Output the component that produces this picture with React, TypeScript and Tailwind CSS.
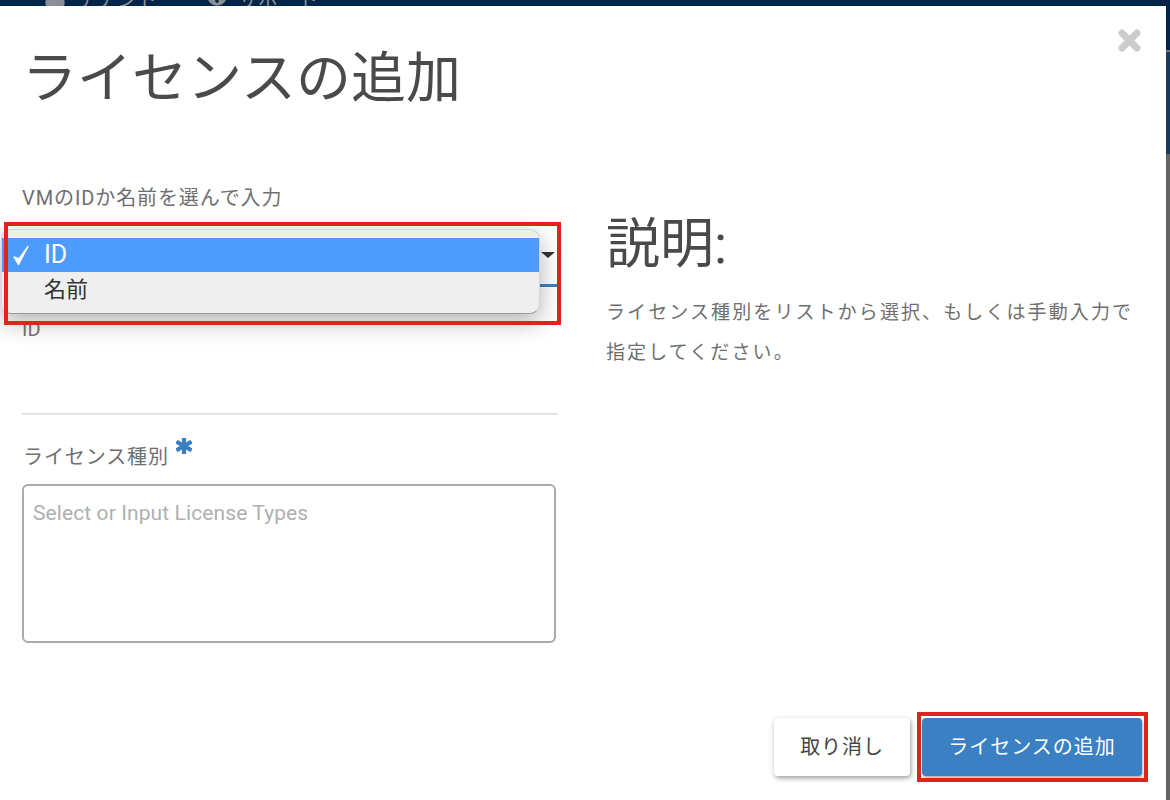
import React from "react";
import { FaAsterisk, FaUser, FaQuestionCircle } from "react-icons/fa";

const font = { fontFamily: '"Roboto","Noto Sans CJK JP",sans-serif' };

export default function App() {
  return (
    <div style={font} className="w-[1170px] h-[800px] overflow-hidden bg-[#fefefe] flex flex-col">
      {/* page behind the dialog */}
      <div className="h-[6px] shrink-0 bg-[#022448] overflow-hidden flex items-end text-[#8a8f96] text-[20px] leading-[20px] pl-[44px]">
        <FaUser className="w-[22px] h-[22px] shrink-0" />
        <span className="ml-[11px] -mb-[4px]">テナント</span>
        <FaQuestionCircle className="w-[20px] h-[20px] shrink-0 ml-[50px]" />
        <span className="ml-[11px] -mb-[4px]">サポート</span>
      </div>
      <div className="flex flex-1 min-h-0">
        <div className="w-[1166px] bg-white rounded-tr-[3px] flex flex-col relative">
          <button className="absolute top-[23px] right-[25px] text-[#cccccc]">
            <svg width="23" height="23" viewBox="0 0 23 23" fill="none" stroke="currentColor" strokeWidth="7" strokeLinecap="round">
              <path d="M4 4 L19 19 M19 4 L4 19" />
            </svg>
          </button>
          <h1 className="pl-[22px] pt-[38px] text-[55px] leading-[68px] font-normal text-[#4a4a4a] h-[172px] shrink-0">
            ライセンスの追加
          </h1>
          <div className="flex flex-1 min-h-0">
            <div className="w-[536px] ml-[22px] shrink-0 relative">
              <label className="block text-[20px] leading-[26px] text-[#6f6f6f] tracking-[0.9px] mt-[7px]">
                VMのIDか名前を選んで入力
              </label>
              <div className="h-[96px] border-b-[3px] border-[#3b80c3] -mt-[20px] relative">
                <div className="absolute right-[3px] top-[61px] w-0 h-0 border-l-[7px] border-r-[7px] border-t-[6px] border-l-transparent border-r-transparent border-t-[#333333]" />
              </div>
              <div className="h-[128px] border-b-2 border-[#e3e3e3] pt-[30px] text-[20px] leading-[24px] text-[#777777]">
                ID
              </div>
              <div className="flex items-start mt-[27px] ml-0 h-[34px]">
                <span className="text-[20px] leading-[30px] text-[#6f6f6f] tracking-[0.9px] ml-[1px]">ライセンス種別</span>
                <FaAsterisk stroke="currentColor" strokeWidth={50} className="w-[16px] h-[16px] text-[#3b80c3] ml-[7px] mt-[-4px]" />
              </div>
              <textarea
                readOnly
                placeholder="Select or Input License Types"
                className="block w-[534px] h-[159px] mt-[8px] border-2 border-[#aaaaaa] rounded-[6px] px-[9px] pt-[13px] pb-[12px] text-[21px] leading-[28px] tracking-[0.1px] outline-none resize-none placeholder:text-[#b0b0b0]"
              />

              {/* open native select menu */}
              <div className="absolute left-[-21px] top-[51px] w-[539px] h-[85px] rounded-[10px] bg-[#efefef] border border-[#d4d4d4] border-b-[#999999] pt-[8px] shadow-[0_8px_24px_rgba(0,0,0,0.3)]">
                <div className="h-[34px] bg-[#4c9bfd] text-white flex items-center relative pl-[42px] text-[25px]">
                  <svg className="absolute left-[10px] top-[7px]" width="18" height="21" viewBox="0 0 18 21" fill="none">
                    <path d="M2 12 L6.5 19.5 L16 1.5 L7 14 Z" fill="#fff" stroke="#fff" strokeWidth="1.4" strokeLinejoin="round" />
                  </svg>
                  ID
                </div>
                <div className="h-[34px] text-[#333333] flex items-center pl-[42px] text-[22px] pt-[1px]">名前</div>
              </div>
              {/* annotation frame */}
              <div className="absolute left-[-18px] top-[44px] w-[557px] h-[103px] border-[4px] border-[#e2231a]" />
            </div>
            <div className="ml-[48px] flex-1 pr-[28px]">
              <h2 className="text-[54px] leading-[60px] font-normal text-[#4a4a4a] mt-[37px]">説明:</h2>
              <p className="mt-[18px] text-[19px] leading-[40px] tracking-[2.1px] text-[#6f6f6f]">
                ライセンス種別をリストから選択、もしくは手動入力で指定してください。
              </p>
            </div>
          </div>
          <div className="flex justify-end items-center h-[70px] mb-[18px] pr-[24px] gap-[12px] relative">
            <button className="w-[136px] h-[58px] rounded-[4px] bg-white text-[#444444] text-[20px] tracking-[0.9px] shadow-[1px_2px_5px_rgba(0,0,0,0.4)]">
              取り消し
            </button>
            <button className="w-[220px] h-[58px] rounded-[4px] bg-[#3b80c3] text-white text-[20px] tracking-[1px] shadow-[1px_2px_3px_rgba(0,0,0,0.3)]">
              ライセンスの追加
            </button>
            <div className="absolute right-[18px] top-0 w-[231px] h-[70px] border-[4px] border-[#e2231a]" />
          </div>
        </div>
        <div className="w-[4px] flex flex-col bg-[#636363]">
          <div className="h-[44px] bg-[#022448]" />
          <div className="h-[2px] bg-[#777777]" />
          <div className="h-[102px] bg-[#1a3a5c]" />
        </div>
      </div>
    </div>
  );
}
